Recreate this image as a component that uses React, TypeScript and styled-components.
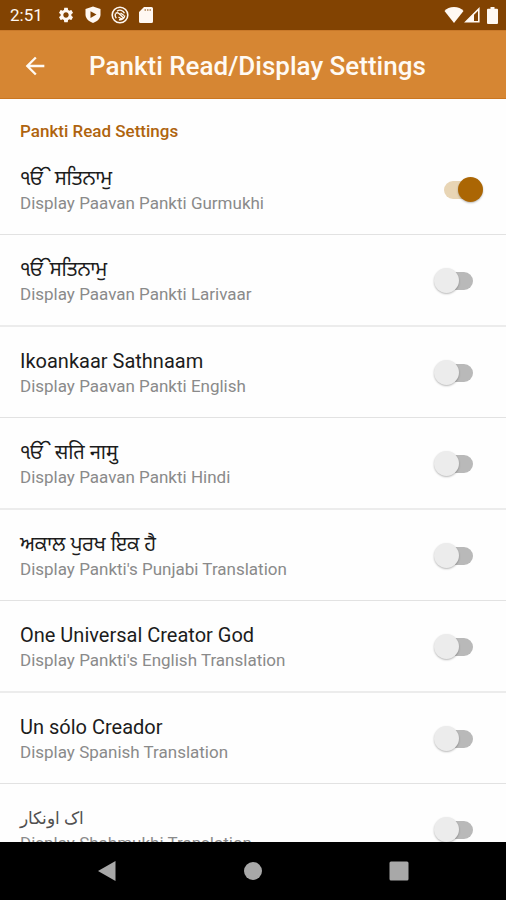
import React, { useState } from "react";
import styled, { createGlobalStyle } from "styled-components";
import { MdSettings, MdArrowBack } from "react-icons/md";

const GlobalStyle = createGlobalStyle`
  * { box-sizing: border-box; }
  body {
    margin: 0;
    background: #fff;
    font-family: Roboto, "Noto Sans", "Noto Sans Gurmukhi", "Noto Sans Devanagari", sans-serif;
  }
`;

const Screen = styled.div`
  display: flex;
  flex-direction: column;
  height: 100vh;
  overflow: hidden;
  background: #fefefe;
`;

const StatusBar = styled.div`
  display: flex;
  flex: none;
  align-items: center;
  justify-content: space-between;
  height: 30px;
  padding: 0 8px 0 10px;
  background: #824302;
  color: #fff8f2;
`;

const StatusGroup = styled.div<{ $gap: number }>`
  display: flex;
  align-items: center;
  gap: ${(p) => p.$gap}px;

  svg {
    display: block;
  }
`;

const Clock = styled.span`
  margin-right: 4px;
  font-size: 17px;
  line-height: 20px;
`;

const AppBar = styled.header`
  display: flex;
  flex: none;
  align-items: center;
  gap: 40px;
  height: 69px;
  padding: 2px 21px 0;
  background: #d68633;
  border-top: 1px solid #c9792a;
  border-bottom: 1px solid #cb7620;
  color: #fffaf3;
`;

const BackButton = styled.button`
  display: flex;
  padding: 0;
  border: 0;
  background: none;
  color: inherit;
  cursor: pointer;
`;

const Title = styled.h1`
  margin: 0;
  font-size: 26px;
  font-weight: 500;
  line-height: 32px;
  white-space: nowrap;
`;

const Content = styled.main`
  flex: 1;
  min-height: 0;
  overflow: hidden;
`;

const SectionTitle = styled.h2`
  margin: 0;
  padding: 20px 20px 1px;
  font-size: 17px;
  font-weight: 500;
  line-height: 24px;
  color: #af640e;
`;

const List = styled.ul`
  margin: 0;
  padding: 0;
  list-style: none;
`;

const Row = styled.li`
  border-bottom: 1px solid #e2e2e2;

  &:nth-child(even) {
    border-bottom: 2px solid #ececec;
  }
`;

const RowLabel = styled.label`
  display: flex;
  align-items: center;
  justify-content: space-between;
  padding: 20px 23px 19px 20px;
  cursor: pointer;
`;

const RowText = styled.span`
  display: flex;
  flex-direction: column;
`;

const Name = styled.span<{ $small?: boolean }>`
  height: 27px;
  font-size: ${(p) => (p.$small ? 17 : 20)}px;
  line-height: 28px;
  color: ${(p) => (p.$small ? "#505050" : "#1c1c1c")};
  white-space: nowrap;
`;

const Description = styled.span`
  font-size: 17px;
  line-height: 24px;
  color: #8a8a8a;
  white-space: nowrap;
`;

const Switch = styled.input`
  display: grid;
  flex: none;
  align-items: center;
  width: 49px;
  height: 26px;
  margin: 0;
  appearance: none;
  cursor: pointer;

  &::before,
  &::after {
    content: "";
    grid-area: 1 / 1;
  }

  &::before {
    height: 18px;
    margin: 0 10px;
    border-radius: 9px;
    background: #b9b9b9;
  }

  &::after {
    width: 25px;
    height: 25px;
    border-radius: 50%;
    background: #ececec;
    box-shadow: 0 1px 2px rgba(0, 0, 0, 0.28);
  }

  &:checked::before {
    background: #e8d5b5;
  }

  &:checked::after {
    justify-self: end;
    background: #ab6604;
  }
`;

const NavBar = styled.nav`
  display: flex;
  flex: none;
  align-items: center;
  justify-content: center;
  gap: 116px;
  height: 58px;
  background: #000;
`;

const NavButton = styled.button`
  display: flex;
  align-items: center;
  justify-content: center;
  width: 30px;
  height: 30px;
  padding: 0;
  border: 0;
  background: none;
  color: #a8a8a8;
`;

const ShieldIcon = () => (
  <svg width="16" height="18" viewBox="0 0 16 18" aria-hidden="true">
    <path d="M8 .5 15.500 3v5.500c0 4-3.200 7-7.500 8.500-4.300-1.500-7.500-4.500-7.500-8.500V3Z" fill="currentColor" />
    <path d="M5.500 5.200 11.500 8.600 5.500 12Z" fill="#824302" />
  </svg>
);

const RingIcon = () => (
  <svg width="18" height="18" viewBox="0 0 18 18" fill="none" stroke="currentColor" aria-hidden="true">
    <circle cx="9" cy="9" r="7.800" strokeWidth="1.600" />
    <path
      d="M5.300 12.300A4.900 4.900 0 0 1 4.300 7.800M6 5.200A4.900 4.900 0 0 1 13.500 7.200M13.800 9.500A4.900 4.900 0 0 1 8 13.700M4.500 7.500Q6.500 5.800 8.500 8L13 12.500M7.500 11Q9.500 12.500 11 13M9.500 7 13 9.500"
      strokeWidth="1.400"
    />
  </svg>
);

const CardIcon = () => (
  <svg width="14" height="16" viewBox="0 0 14 16" aria-hidden="true">
    <path d="M5 0h7.500A1.500 1.500 0 0 1 14 1.500v13a1.500 1.500 0 0 1-1.500 1.500h-11A1.500 1.500 0 0 1 0 14.500V5Z" fill="currentColor" />
    <path d="M5.500 3h6.500" stroke="#824302" strokeOpacity=".5" strokeWidth="2" strokeDasharray="1.500 1" />
  </svg>
);

const WifiIcon = () => (
  <svg width="20" height="16" viewBox="0 0 20 16" aria-hidden="true">
    <path d="M10 0C14 0 17.300 1.600 19.500 4L10 16 .5 4C2.700 1.600 6 0 10 0Z" fill="currentColor" />
  </svg>
);

const SignalIcon = () => (
  <svg width="16" height="16" viewBox="0 0 16 16" aria-hidden="true">
    <path d="M14.800 2v12.800H2Z" fill="none" stroke="currentColor" strokeWidth="1.600" />
    <path d="M10 6.500V15H2Z" fill="currentColor" />
  </svg>
);

const BatteryIcon = () => (
  <svg width="11" height="17" viewBox="0 0 11 17" aria-hidden="true">
    <path d="M3.500 0h4v1.800H10a1 1 0 0 1 1 1V16a1 1 0 0 1-1 1H1a1 1 0 0 1-1-1V2.800a1 1 0 0 1 1-1h2.500Z" fill="currentColor" />
  </svg>
);

type Setting = { name: string; lang: string; description: string; on?: boolean };

const settings: Setting[] = [
  { name: "ੴ ਸਤਿਨਾਮੁ", lang: "pa", description: "Display Paavan Pankti Gurmukhi", on: true },
  { name: "ੴਸਤਿਨਾਮੁ", lang: "pa", description: "Display Paavan Pankti Larivaar" },
  { name: "Ikoankaar Sathnaam", lang: "en", description: "Display Paavan Pankti English" },
  { name: "ੴ सति नामु", lang: "hi", description: "Display Paavan Pankti Hindi" },
  { name: "ਅਕਾਲ ਪੁਰਖ ਇਕ ਹੈ", lang: "pa", description: "Display Pankti's Punjabi Translation" },
  { name: "One Universal Creator God", lang: "en", description: "Display Pankti's English Translation" },
  { name: "Un sólo Creador", lang: "es", description: "Display Spanish Translation" },
  { name: "اک اونکار", lang: "pa-Arab", description: "Display Shahmukhi Translation" },
];

function SettingRow({ setting }: { setting: Setting }) {
  const [on, setOn] = useState(Boolean(setting.on));
  return (
    <Row>
      <RowLabel>
        <RowText>
          <Name lang={setting.lang} $small={setting.lang === "pa-Arab"}>
            {setting.name}
          </Name>
          <Description>{setting.description}</Description>
        </RowText>
        <Switch type="checkbox" role="switch" checked={on} onChange={(e) => setOn(e.target.checked)} />
      </RowLabel>
    </Row>
  );
}

export default function App() {
  return (
    <>
      <GlobalStyle />
      <Screen>
        <StatusBar>
          <StatusGroup $gap={10}>
            <Clock>2:51</Clock>
            <MdSettings size={18} />
            <ShieldIcon />
            <RingIcon />
            <CardIcon />
          </StatusGroup>
          <StatusGroup $gap={7}>
            <StatusGroup $gap={0}>
              <WifiIcon />
              <SignalIcon />
            </StatusGroup>
            <BatteryIcon />
          </StatusGroup>
        </StatusBar>
        <AppBar>
          <BackButton aria-label="Back">
            <MdArrowBack size={28} />
          </BackButton>
          <Title>Pankti Read/Display Settings</Title>
        </AppBar>
        <Content>
          <SectionTitle>Pankti Read Settings</SectionTitle>
          <List>
            {settings.map((s) => (
              <SettingRow key={s.description} setting={s} />
            ))}
          </List>
        </Content>
        <NavBar>
          <NavButton aria-label="Back">
            <svg width="20" height="22" viewBox="0 0 20 22" aria-hidden="true">
              <path d="M18.500 1v20L1 11Z" fill="currentColor" />
            </svg>
          </NavButton>
          <NavButton aria-label="Home">
            <svg width="20" height="20" viewBox="0 0 20 20" aria-hidden="true">
              <circle cx="10" cy="10" r="9" fill="currentColor" />
            </svg>
          </NavButton>
          <NavButton aria-label="Recent apps">
            <svg width="20" height="20" viewBox="0 0 20 20" aria-hidden="true">
              <rect x=".5" y=".5" width="19" height="19" rx="1.500" fill="currentColor" />
            </svg>
          </NavButton>
        </NavBar>
      </Screen>
    </>
  );
}
